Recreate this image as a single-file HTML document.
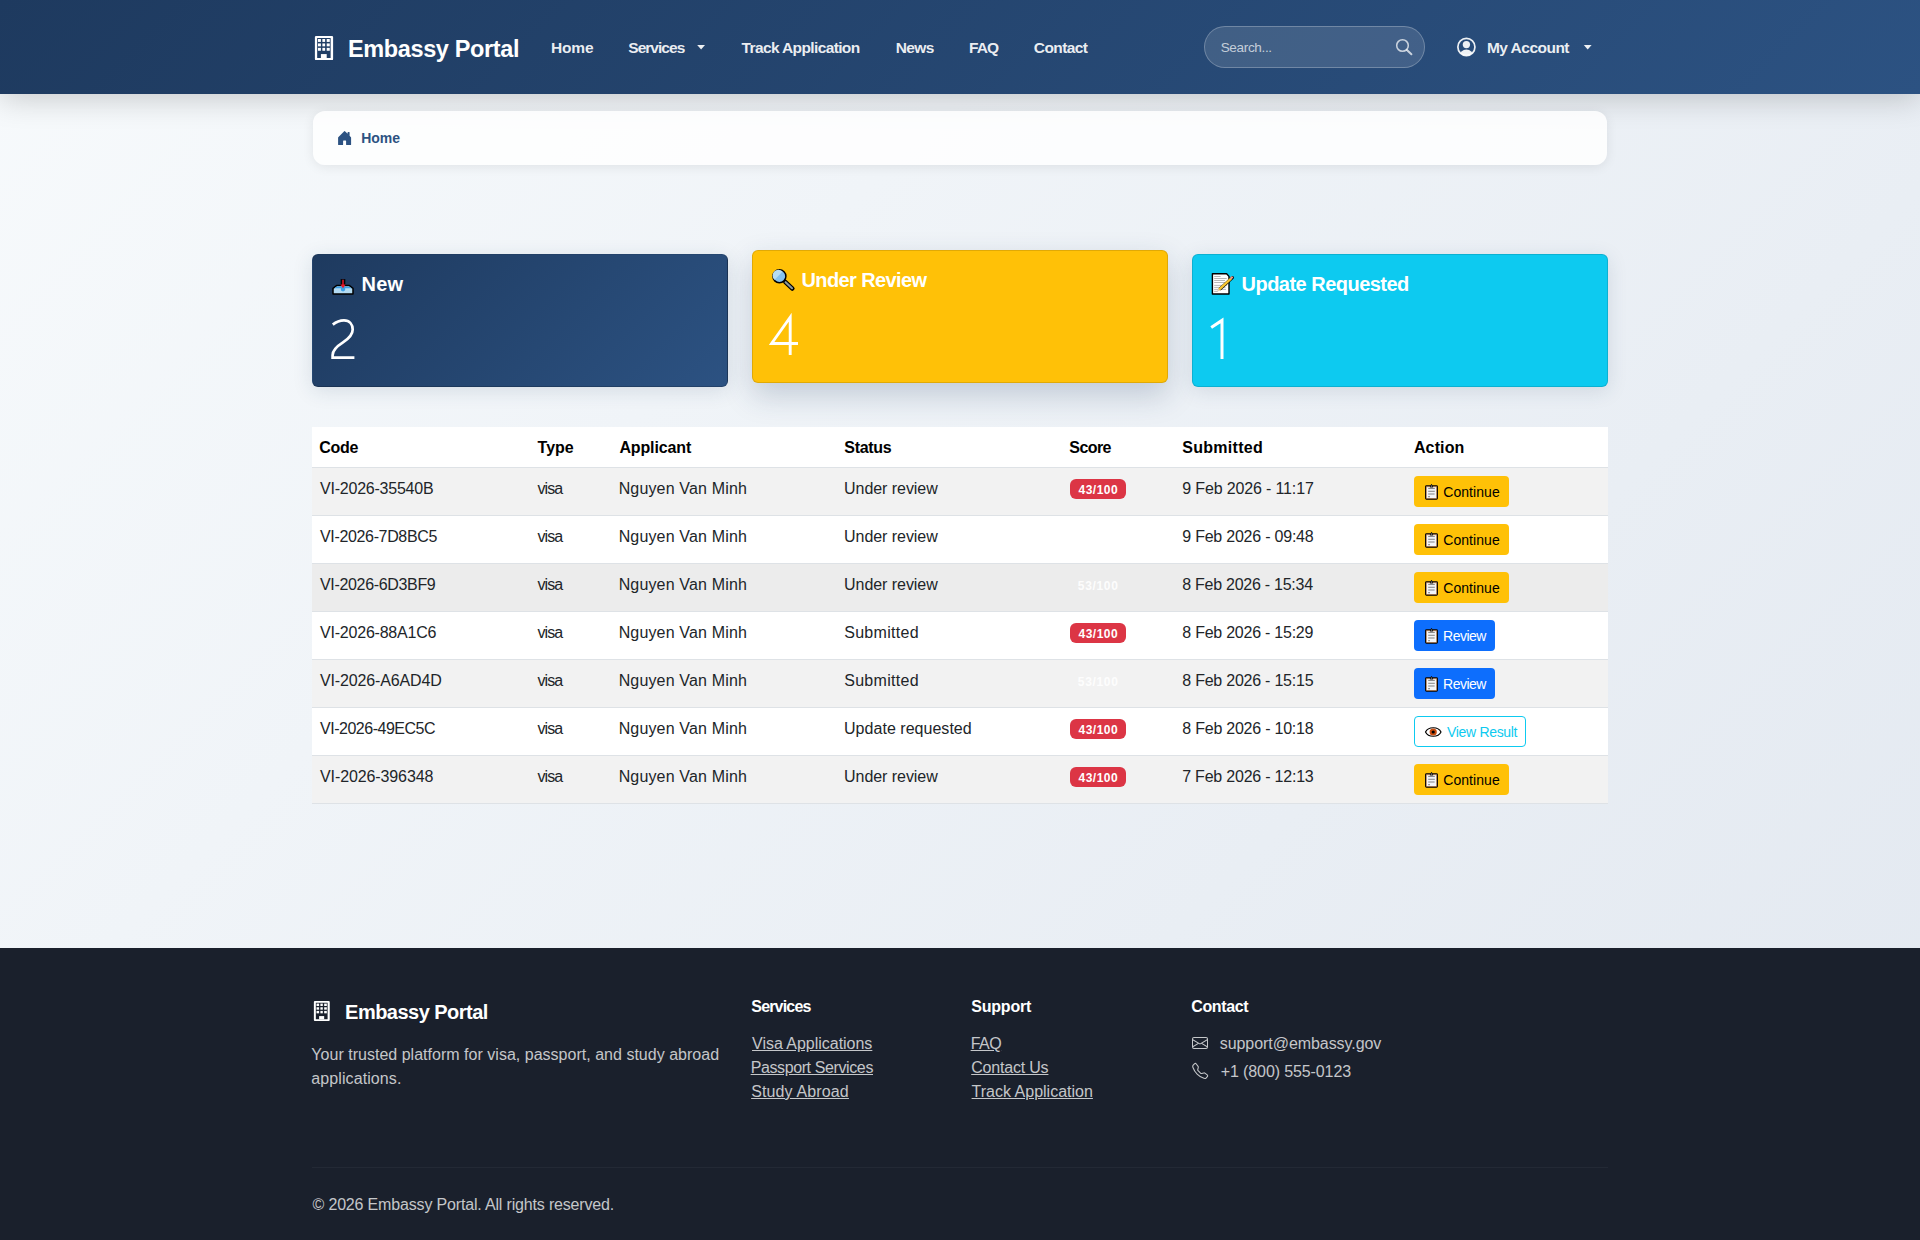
<!DOCTYPE html>
<html><head><meta charset="utf-8"><title>Embassy Portal</title>
<style>
html,body{margin:0;padding:0;width:1920px;height:1240px;overflow:hidden;}
body{position:relative;font-family:"Liberation Sans",sans-serif;background:linear-gradient(135deg,#f7fafc 0%,#e2e8f0 100%);}
.t{position:absolute;white-space:nowrap;}
.nav{position:absolute;left:0;top:0;width:1920px;height:94px;background:linear-gradient(135deg,#1e3a5f 0%,#2c5282 100%);box-shadow:0 4px 30px rgba(0,0,0,0.2);}
.search{position:absolute;left:1204px;top:26px;width:219px;height:40px;border-radius:21px;background:rgba(255,255,255,0.12);border:1px solid rgba(255,255,255,0.25);}
.bc{position:absolute;left:313px;top:111px;width:1294px;height:54px;border-radius:12px;background:rgba(255,255,255,0.82);box-shadow:0 2px 12px rgba(0,0,0,0.08);}
.card{position:absolute;width:414px;height:131px;border-radius:6px;border:1px solid rgba(0,0,0,0.12);box-shadow:0 4px 20px rgba(30,58,95,0.13);}
.c1{left:312px;top:254px;background:linear-gradient(135deg,#1e3a5f 0%,#2c5282 100%);}
.c2{left:752px;top:250px;background:#ffc107;box-shadow:0 12px 30px rgba(30,58,95,0.22);}
.c3{left:1192px;top:254px;background:#0dcaf0;}
.tbl{position:absolute;left:312px;top:427px;width:1296px;height:377px;background:#fff;}
.row{position:absolute;left:312px;width:1296px;height:47px;}
.hl{position:absolute;left:312px;width:1296px;height:1px;background:#dee2e6;}
.badge{position:absolute;left:1070px;width:56px;height:20px;border-radius:6px;background:#dc3545;}
.btn{position:absolute;left:1414px;height:31px;border-radius:4px;box-sizing:border-box;}
.bw{background:#ffc107;}
.bp{background:#0d6efd;}
.bo{border:1px solid #0dcaf0;background:#fff;}
.foot{position:absolute;left:0;top:948px;width:1920px;height:292px;background:#1a202c;}
.fhr{position:absolute;left:312px;top:1167px;width:1296px;height:1px;background:rgba(255,255,255,0.045);}
svg.ov{position:absolute;left:0;top:0;}
</style></head><body>
<div class="nav"></div>
<div class="search"></div>
<div class="bc"></div>
<div class="card c1"></div><div class="card c2"></div><div class="card c3"></div>
<div class="tbl"></div>
<div class="hl" style="top:467px"></div>
<div class="row" style="top:468px;background:#f2f2f2"></div>
<div class="hl" style="top:515px"></div>
<div class="badge" style="top:479px"></div>
<div class="btn bw" style="top:476px;width:95px"></div>
<div class="row" style="top:516px;background:#ffffff"></div>
<div class="hl" style="top:563px"></div>
<div class="btn bw" style="top:524px;width:95px"></div>
<div class="row" style="top:564px;background:#ececec"></div>
<div class="hl" style="top:611px"></div>
<div class="badge" style="top:575px;background:transparent"></div>
<div class="btn bw" style="top:572px;width:95px"></div>
<div class="row" style="top:612px;background:#ffffff"></div>
<div class="hl" style="top:659px"></div>
<div class="badge" style="top:623px"></div>
<div class="btn bp" style="top:620px;width:81px"></div>
<div class="row" style="top:660px;background:#f2f2f2"></div>
<div class="hl" style="top:707px"></div>
<div class="badge" style="top:671px;background:transparent"></div>
<div class="btn bp" style="top:668px;width:81px"></div>
<div class="row" style="top:708px;background:#ffffff"></div>
<div class="hl" style="top:755px"></div>
<div class="badge" style="top:719px"></div>
<div class="btn bo" style="top:716px;width:112px"></div>
<div class="row" style="top:756px;background:#f2f2f2"></div>
<div class="hl" style="top:803px"></div>
<div class="badge" style="top:767px"></div>
<div class="btn bw" style="top:764px;width:95px"></div>
<div class="foot"></div>
<div class="fhr"></div>
<div class="t" id="t0" style="left:347.89px;top:36.00px;font-size:23.5px;line-height:26px;font-weight:700;color:#ffffff;letter-spacing:-0.361px;">Embassy Portal</div>
<div class="t" id="t1" style="left:551.09px;top:39.00px;font-size:15.5px;line-height:17px;font-weight:700;color:rgba(255,255,255,0.92);letter-spacing:-0.190px;">Home</div>
<div class="t" id="t2" style="left:628.29px;top:39.00px;font-size:15.5px;line-height:17px;font-weight:700;color:rgba(255,255,255,0.92);letter-spacing:-0.969px;">Services</div>
<div class="t" id="t3" style="left:741.56px;top:39.00px;font-size:15.5px;line-height:17px;font-weight:700;color:rgba(255,255,255,0.92);letter-spacing:-0.625px;">Track Application</div>
<div class="t" id="t4" style="left:895.69px;top:39.00px;font-size:15.5px;line-height:17px;font-weight:700;color:rgba(255,255,255,0.92);letter-spacing:-0.638px;">News</div>
<div class="t" id="t5" style="left:969.09px;top:39.00px;font-size:15.5px;line-height:17px;font-weight:700;color:rgba(255,255,255,0.92);letter-spacing:-0.964px;">FAQ</div>
<div class="t" id="t6" style="left:1033.82px;top:39.00px;font-size:15.5px;line-height:17px;font-weight:700;color:rgba(255,255,255,0.92);letter-spacing:-0.581px;">Contact</div>
<div class="t" id="t7" style="left:1220.65px;top:40.00px;font-size:13.5px;line-height:15px;font-weight:400;color:rgba(255,255,255,0.7);letter-spacing:-0.318px;">Search...</div>
<div class="t" id="t8" style="left:1486.89px;top:39.00px;font-size:15.5px;line-height:17px;font-weight:700;color:rgba(255,255,255,0.92);letter-spacing:-0.515px;">My Account</div>
<div class="t" id="t9" style="left:361.15px;top:130.00px;font-size:14px;line-height:16px;font-weight:700;color:#2c5282;letter-spacing:0.018px;">Home</div>
<div class="t" id="t10" style="left:361.61px;top:273.00px;font-size:20px;line-height:22px;font-weight:700;color:#ffffff;letter-spacing:0.175px;">New</div>
<div class="t" id="t11" style="left:801.54px;top:269.00px;font-size:20px;line-height:22px;font-weight:700;color:#ffffff;letter-spacing:-0.620px;">Under Review</div>
<div class="t" id="t12" style="left:1241.54px;top:273.00px;font-size:20px;line-height:22px;font-weight:700;color:#ffffff;letter-spacing:-0.521px;">Update Requested</div>
<div class="t" id="t13" style="left:319.31px;top:439.00px;font-size:16px;line-height:17px;font-weight:700;color:#000;letter-spacing:-0.284px;">Code</div>
<div class="t" id="t14" style="left:537.54px;top:439.00px;font-size:16px;line-height:17px;font-weight:700;color:#000;letter-spacing:0.012px;">Type</div>
<div class="t" id="t15" style="left:619.40px;top:439.00px;font-size:16px;line-height:17px;font-weight:700;color:#000;letter-spacing:-0.129px;">Applicant</div>
<div class="t" id="t16" style="left:844.29px;top:439.00px;font-size:16px;line-height:17px;font-weight:700;color:#000;letter-spacing:-0.311px;">Status</div>
<div class="t" id="t17" style="left:1069.29px;top:439.00px;font-size:16px;line-height:17px;font-weight:700;color:#000;letter-spacing:-0.562px;">Score</div>
<div class="t" id="t18" style="left:1182.29px;top:439.00px;font-size:16px;line-height:17px;font-weight:700;color:#000;letter-spacing:0.279px;">Submitted</div>
<div class="t" id="t19" style="left:1413.90px;top:439.00px;font-size:16px;line-height:17px;font-weight:700;color:#000;letter-spacing:0.146px;">Action</div>
<div class="t" id="t20" style="left:320.04px;top:480.00px;font-size:16px;line-height:17px;font-weight:400;color:#212529;letter-spacing:-0.229px;">VI-2026-35540B</div>
<div class="t" id="t21" style="left:537.54px;top:480.00px;font-size:16px;line-height:17px;font-weight:400;color:#212529;letter-spacing:-0.922px;">visa</div>
<div class="t" id="t22" style="left:618.64px;top:480.00px;font-size:16px;line-height:17px;font-weight:400;color:#212529;letter-spacing:0.161px;">Nguyen Van Minh</div>
<div class="t" id="t23" style="left:844.04px;top:480.00px;font-size:16px;line-height:17px;font-weight:400;color:#212529;letter-spacing:-0.049px;">Under review</div>
<div class="t" id="t24" style="left:1182.24px;top:480.00px;font-size:16px;line-height:17px;font-weight:400;color:#212529;letter-spacing:-0.146px;">9 Feb 2026 - 11:17</div>
<div class="t" id="t25" style="left:320.04px;top:528.00px;font-size:16px;line-height:17px;font-weight:400;color:#212529;letter-spacing:-0.349px;">VI-2026-7D8BC5</div>
<div class="t" id="t26" style="left:537.54px;top:528.00px;font-size:16px;line-height:17px;font-weight:400;color:#212529;letter-spacing:-0.922px;">visa</div>
<div class="t" id="t27" style="left:618.64px;top:528.00px;font-size:16px;line-height:17px;font-weight:400;color:#212529;letter-spacing:0.161px;">Nguyen Van Minh</div>
<div class="t" id="t28" style="left:844.04px;top:528.00px;font-size:16px;line-height:17px;font-weight:400;color:#212529;letter-spacing:-0.049px;">Under review</div>
<div class="t" id="t29" style="left:1182.24px;top:528.00px;font-size:16px;line-height:17px;font-weight:400;color:#212529;letter-spacing:-0.221px;">9 Feb 2026 - 09:48</div>
<div class="t" id="t30" style="left:320.04px;top:576.00px;font-size:16px;line-height:17px;font-weight:400;color:#212529;letter-spacing:-0.336px;">VI-2026-6D3BF9</div>
<div class="t" id="t31" style="left:537.54px;top:576.00px;font-size:16px;line-height:17px;font-weight:400;color:#212529;letter-spacing:-0.922px;">visa</div>
<div class="t" id="t32" style="left:618.64px;top:576.00px;font-size:16px;line-height:17px;font-weight:400;color:#212529;letter-spacing:0.161px;">Nguyen Van Minh</div>
<div class="t" id="t33" style="left:844.04px;top:576.00px;font-size:16px;line-height:17px;font-weight:400;color:#212529;letter-spacing:-0.049px;">Under review</div>
<div class="t" id="t34" style="left:1182.27px;top:576.00px;font-size:16px;line-height:17px;font-weight:400;color:#212529;letter-spacing:-0.258px;">8 Feb 2026 - 15:34</div>
<div class="t" id="t35" style="left:320.04px;top:624.00px;font-size:16px;line-height:17px;font-weight:400;color:#212529;letter-spacing:-0.214px;">VI-2026-88A1C6</div>
<div class="t" id="t36" style="left:537.54px;top:624.00px;font-size:16px;line-height:17px;font-weight:400;color:#212529;letter-spacing:-0.922px;">visa</div>
<div class="t" id="t37" style="left:618.64px;top:624.00px;font-size:16px;line-height:17px;font-weight:400;color:#212529;letter-spacing:0.161px;">Nguyen Van Minh</div>
<div class="t" id="t38" style="left:844.15px;top:624.00px;font-size:16px;line-height:17px;font-weight:400;color:#212529;letter-spacing:0.318px;">Submitted</div>
<div class="t" id="t39" style="left:1182.27px;top:624.00px;font-size:16px;line-height:17px;font-weight:400;color:#212529;letter-spacing:-0.239px;">8 Feb 2026 - 15:29</div>
<div class="t" id="t40" style="left:320.04px;top:672.00px;font-size:16px;line-height:17px;font-weight:400;color:#212529;letter-spacing:-0.141px;">VI-2026-A6AD4D</div>
<div class="t" id="t41" style="left:537.54px;top:672.00px;font-size:16px;line-height:17px;font-weight:400;color:#212529;letter-spacing:-0.922px;">visa</div>
<div class="t" id="t42" style="left:618.64px;top:672.00px;font-size:16px;line-height:17px;font-weight:400;color:#212529;letter-spacing:0.161px;">Nguyen Van Minh</div>
<div class="t" id="t43" style="left:844.15px;top:672.00px;font-size:16px;line-height:17px;font-weight:400;color:#212529;letter-spacing:0.318px;">Submitted</div>
<div class="t" id="t44" style="left:1182.27px;top:672.00px;font-size:16px;line-height:17px;font-weight:400;color:#212529;letter-spacing:-0.231px;">8 Feb 2026 - 15:15</div>
<div class="t" id="t45" style="left:320.04px;top:720.00px;font-size:16px;line-height:17px;font-weight:400;color:#212529;letter-spacing:-0.488px;">VI-2026-49EC5C</div>
<div class="t" id="t46" style="left:537.54px;top:720.00px;font-size:16px;line-height:17px;font-weight:400;color:#212529;letter-spacing:-0.922px;">visa</div>
<div class="t" id="t47" style="left:618.64px;top:720.00px;font-size:16px;line-height:17px;font-weight:400;color:#212529;letter-spacing:0.161px;">Nguyen Van Minh</div>
<div class="t" id="t48" style="left:844.04px;top:720.00px;font-size:16px;line-height:17px;font-weight:400;color:#212529;letter-spacing:0.030px;">Update requested</div>
<div class="t" id="t49" style="left:1182.27px;top:720.00px;font-size:16px;line-height:17px;font-weight:400;color:#212529;letter-spacing:-0.226px;">8 Feb 2026 - 10:18</div>
<div class="t" id="t50" style="left:320.04px;top:768.00px;font-size:16px;line-height:17px;font-weight:400;color:#212529;letter-spacing:-0.110px;">VI-2026-396348</div>
<div class="t" id="t51" style="left:537.54px;top:768.00px;font-size:16px;line-height:17px;font-weight:400;color:#212529;letter-spacing:-0.922px;">visa</div>
<div class="t" id="t52" style="left:618.64px;top:768.00px;font-size:16px;line-height:17px;font-weight:400;color:#212529;letter-spacing:0.161px;">Nguyen Van Minh</div>
<div class="t" id="t53" style="left:844.04px;top:768.00px;font-size:16px;line-height:17px;font-weight:400;color:#212529;letter-spacing:-0.049px;">Under review</div>
<div class="t" id="t54" style="left:1182.21px;top:768.00px;font-size:16px;line-height:17px;font-weight:400;color:#212529;letter-spacing:-0.216px;">7 Feb 2026 - 12:13</div>
<div class="t" id="t55" style="left:1078.54px;top:483.00px;font-size:12px;line-height:14px;font-weight:700;color:#fff;letter-spacing:0.482px;">43/100</div>
<div class="t" id="t56" style="left:1443.25px;top:484.00px;font-size:14px;line-height:16px;font-weight:400;color:#000;letter-spacing:0.053px;">Continue</div>
<div class="t" id="t57" style="left:1443.25px;top:532.00px;font-size:14px;line-height:16px;font-weight:400;color:#000;letter-spacing:0.053px;">Continue</div>
<div class="t" id="t58" style="left:1077.84px;top:579.00px;font-size:12px;line-height:14px;font-weight:700;color:rgba(255,255,255,0.9);letter-spacing:0.670px;">53/100</div>
<div class="t" id="t59" style="left:1443.25px;top:580.00px;font-size:14px;line-height:16px;font-weight:400;color:#000;letter-spacing:0.053px;">Continue</div>
<div class="t" id="t60" style="left:1078.54px;top:627.00px;font-size:12px;line-height:14px;font-weight:700;color:#fff;letter-spacing:0.482px;">43/100</div>
<div class="t" id="t61" style="left:1443.06px;top:628.00px;font-size:14px;line-height:16px;font-weight:400;color:#fff;letter-spacing:-0.497px;">Review</div>
<div class="t" id="t62" style="left:1077.84px;top:675.00px;font-size:12px;line-height:14px;font-weight:700;color:rgba(255,255,255,0.9);letter-spacing:0.670px;">53/100</div>
<div class="t" id="t63" style="left:1443.06px;top:676.00px;font-size:14px;line-height:16px;font-weight:400;color:#fff;letter-spacing:-0.497px;">Review</div>
<div class="t" id="t64" style="left:1078.54px;top:723.00px;font-size:12px;line-height:14px;font-weight:700;color:#fff;letter-spacing:0.482px;">43/100</div>
<div class="t" id="t65" style="left:1447.04px;top:724.00px;font-size:14px;line-height:16px;font-weight:400;color:#0dcaf0;letter-spacing:-0.321px;">View Result</div>
<div class="t" id="t66" style="left:1078.54px;top:771.00px;font-size:12px;line-height:14px;font-weight:700;color:#fff;letter-spacing:0.482px;">43/100</div>
<div class="t" id="t67" style="left:1443.25px;top:772.00px;font-size:14px;line-height:16px;font-weight:400;color:#000;letter-spacing:0.053px;">Continue</div>
<div class="t" id="t68" style="left:345.11px;top:1001.00px;font-size:20px;line-height:22px;font-weight:700;color:#ffffff;letter-spacing:-0.527px;">Embassy Portal</div>
<div class="t" id="t69" style="left:311.34px;top:1046.00px;font-size:16px;line-height:17px;font-weight:400;color:rgba(255,255,255,0.75);letter-spacing:0.018px;">Your trusted platform for visa, passport, and study abroad</div>
<div class="t" id="t70" style="left:311.28px;top:1070.00px;font-size:16px;line-height:17px;font-weight:400;color:rgba(255,255,255,0.75);letter-spacing:0.098px;">applications.</div>
<div class="t" id="t71" style="left:751.29px;top:998.00px;font-size:16px;line-height:17px;font-weight:700;color:#ffffff;letter-spacing:-0.824px;">Services</div>
<div class="t" id="t72" style="left:971.29px;top:998.00px;font-size:16px;line-height:17px;font-weight:700;color:#ffffff;letter-spacing:-0.216px;">Support</div>
<div class="t" id="t73" style="left:1191.31px;top:998.00px;font-size:16px;line-height:17px;font-weight:700;color:#ffffff;letter-spacing:-0.377px;">Contact</div>
<div class="t" id="t74" style="left:752.04px;top:1035.00px;font-size:16px;line-height:17px;font-weight:400;color:rgba(255,255,255,0.75);letter-spacing:-0.022px;text-decoration:underline;">Visa Applications</div>
<div class="t" id="t75" style="left:750.64px;top:1059.00px;font-size:16px;line-height:17px;font-weight:400;color:rgba(255,255,255,0.75);letter-spacing:-0.386px;text-decoration:underline;">Passport Services</div>
<div class="t" id="t76" style="left:751.15px;top:1083.00px;font-size:16px;line-height:17px;font-weight:400;color:rgba(255,255,255,0.75);letter-spacing:0.140px;text-decoration:underline;">Study Abroad</div>
<div class="t" id="t77" style="left:970.64px;top:1035.00px;font-size:16px;line-height:17px;font-weight:400;color:rgba(255,255,255,0.75);letter-spacing:-0.500px;text-decoration:underline;">FAQ</div>
<div class="t" id="t78" style="left:971.21px;top:1059.00px;font-size:16px;line-height:17px;font-weight:400;color:rgba(255,255,255,0.75);letter-spacing:-0.191px;text-decoration:underline;">Contact Us</div>
<div class="t" id="t79" style="left:971.59px;top:1083.00px;font-size:16px;line-height:17px;font-weight:400;color:rgba(255,255,255,0.75);letter-spacing:0.005px;text-decoration:underline;">Track Application</div>
<div class="t" id="t80" style="left:1219.76px;top:1035.00px;font-size:16px;line-height:17px;font-weight:400;color:rgba(255,255,255,0.75);letter-spacing:-0.060px;">support@embassy.gov</div>
<div class="t" id="t81" style="left:1220.74px;top:1063.00px;font-size:16px;line-height:17px;font-weight:400;color:rgba(255,255,255,0.75);letter-spacing:-0.109px;">+1 (800) 555-0123</div>
<div class="t" id="t82" style="left:312.53px;top:1196.00px;font-size:16px;line-height:17px;font-weight:400;color:rgba(255,255,255,0.75);letter-spacing:-0.169px;">&copy; 2026 Embassy Portal. All rights reserved.</div>
<svg class="ov" width="1920" height="1240" viewBox="0 0 1920 1240">
<g transform="translate(314.7,35.9) scale(0.9842,1.0042)" fill="#fff">
<path fill-rule="evenodd" d="M0.2,1.2 Q0.2,0 1.4,0 H17.5 Q18.7,0 18.7,1.2 V22.9 Q18.7,24.1 17.5,24.1 H1.4 Q0.2,24.1 0.2,22.9 Z M2.5,2.2 V21.9 H16.2 V2.2 Z"/>
<rect x="3.3" y="3.1" width="3" height="2.9"/><rect x="7.8" y="3.1" width="2.8" height="2.9"/><rect x="12.2" y="3.1" width="3.1" height="2.9"/>
<rect x="3.3" y="7.5" width="3" height="2.9"/><rect x="7.8" y="7.5" width="2.8" height="2.9"/><rect x="12.2" y="7.5" width="3.1" height="2.9"/>
<rect x="3.3" y="11.9" width="3" height="2.9"/><rect x="7.8" y="11.9" width="2.8" height="2.9"/><rect x="12.2" y="11.9" width="3.1" height="2.9"/>
<rect x="6.3" y="18.1" width="5.9" height="3.9"/>
</g>
<g transform="translate(313.7,1001) scale(0.8579,0.8333)" fill="#fff">
<path fill-rule="evenodd" d="M0.2,1.2 Q0.2,0 1.4,0 H17.5 Q18.7,0 18.7,1.2 V22.9 Q18.7,24.1 17.5,24.1 H1.4 Q0.2,24.1 0.2,22.9 Z M2.5,2.2 V21.9 H16.2 V2.2 Z"/>
<rect x="3.3" y="3.1" width="3" height="2.9"/><rect x="7.8" y="3.1" width="2.8" height="2.9"/><rect x="12.2" y="3.1" width="3.1" height="2.9"/>
<rect x="3.3" y="7.5" width="3" height="2.9"/><rect x="7.8" y="7.5" width="2.8" height="2.9"/><rect x="12.2" y="7.5" width="3.1" height="2.9"/>
<rect x="3.3" y="11.9" width="3" height="2.9"/><rect x="7.8" y="11.9" width="2.8" height="2.9"/><rect x="12.2" y="11.9" width="3.1" height="2.9"/>
<rect x="6.3" y="18.1" width="5.9" height="3.9"/>
</g>
<g transform="translate(336.6,130) scale(1)" fill="#2c5282"><path d="M6.5 14.5v-3.505c0-.245.25-.495.5-.495h2c.25 0 .5.25.5.5v3.5a.5.5 0 0 0 .5.5h4a.5.5 0 0 0 .5-.5v-7a.5.5 0 0 0-.146-.354L13 5.793V2.5a.5.5 0 0 0-.5-.5h-1a.5.5 0 0 0-.5.5v1.293L8.354 1.146a.5.5 0 0 0-.708 0l-6 6A.5.5 0 0 0 1.5 7.5v7a.5.5 0 0 0 .5.5h4a.5.5 0 0 0 .5-.5"/></g>
<circle cx="1402.5" cy="45.5" r="5.8" fill="none" stroke="rgba(255,255,255,0.72)" stroke-width="1.55"/><line x1="1406.9" y1="50" x2="1411.4" y2="54.3" stroke="rgba(255,255,255,0.72)" stroke-width="2" stroke-linecap="round"/>
<clipPath id="pc"><circle cx="1466.4" cy="47" r="8.6"/></clipPath><circle cx="1466.4" cy="47" r="8.55" fill="none" stroke="rgba(255,255,255,0.92)" stroke-width="1.7"/><circle cx="1466.4" cy="44.6" r="3.65" fill="rgba(255,255,255,0.92)"/><ellipse cx="1466.4" cy="56.2" rx="6.9" ry="6.6" fill="rgba(255,255,255,0.92)" clip-path="url(#pc)"/>
<path d="M697.2,45 H705.0 L701.1,49.4 Z" fill="rgba(255,255,255,0.92)"/>
<path d="M1583.8,45 H1591.6 L1587.7,49.4 Z" fill="rgba(255,255,255,0.92)"/>
<g transform="translate(1192,1035)" fill="rgba(255,255,255,0.75)"><path d="M0 4a2 2 0 0 1 2-2h12a2 2 0 0 1 2 2v8a2 2 0 0 1-2 2H2a2 2 0 0 1-2-2zm2-1a1 1 0 0 0-1 1v.217l7 4.2 7-4.2V4a1 1 0 0 0-1-1zm13 2.383-4.708 2.825L15 11.105zm-.034 6.876-5.64-3.471L8 9.583l-1.326-.795-5.64 3.47A1 1 0 0 0 2 13h12a1 1 0 0 0 .966-.741M1 11.105l4.708-2.897L1 5.383z"/></g>
<g transform="translate(1192.2,1063)" fill="rgba(255,255,255,0.75)"><path d="M3.654 1.328a.678.678 0 0 0-1.015-.063L1.605 2.3c-.483.484-.661 1.169-.45 1.77a17.6 17.6 0 0 0 4.168 6.608 17.6 17.6 0 0 0 6.608 4.168c.601.211 1.286.033 1.77-.45l1.034-1.034a.678.678 0 0 0-.063-1.015l-2.307-1.794a.68.68 0 0 0-.58-.122l-2.19.547a1.75 1.75 0 0 1-1.657-.459L5.482 8.062a1.75 1.75 0 0 1-.46-1.657l.548-2.19a.68.68 0 0 0-.122-.58zM1.884.511a1.745 1.745 0 0 1 2.612.163L6.29 2.98c.329.423.445.974.315 1.494l-.547 2.19a.68.68 0 0 0 .178.643l2.457 2.457a.68.68 0 0 0 .644.178l2.189-.547a1.75 1.75 0 0 1 1.494.315l2.306 1.794c.829.645.905 1.87.163 2.611l-1.034 1.034c-.74.74-1.846 1.065-2.877.702a18.6 18.6 0 0 1-7.01-4.42 18.6 18.6 0 0 1-4.42-7.009c-.362-1.03-.037-2.137.703-2.877z"/></g>
<path d="M332.8,324.6 C336,322 340,320.4 344,320.4 C349.6,320.4 352.7,324.4 352.7,329.6 C352.7,335 349,338.6 343,342.4 C336,346.8 332.6,351 332.6,355.2 V357.6 H354.4" fill="none" stroke="#fff" stroke-width="2.7"/>
<path d="M790.2,355 V317.2 L771.6,343.5 H798" fill="none" stroke="#fff" stroke-width="2.9" stroke-linejoin="miter"/>
<path d="M1222,359 V320.4 L1211.2,327.6" fill="none" stroke="#fff" stroke-width="3"/>
<g>
<path d="M341.2,286 V279 M344.8,286 V279" stroke="#000" stroke-width="1"/>
<path d="M333,294 V288.4 L336.6,285.6 H349.4 L353,288.4 V294 Z" fill="#b3dbf2" stroke="#000" stroke-width="1.5" stroke-linejoin="round"/>
<path d="M334.2,288.2 L337,286.4 H349 L351.8,288.2 Z" fill="#3d9fe6"/>
<ellipse cx="343" cy="289" rx="2.3" ry="2.4" fill="#3d9fe6"/>
<path d="M343,279.2 V286" stroke="#000" stroke-width="3.4"/>
<path d="M343,279.8 V285.5" stroke="#e8162a" stroke-width="1.5"/>
<path d="M340.4,284.4 L343,288.2 L345.6,284.4 Z" fill="#e8162a"/>
</g>
<g>
<line x1="785.2" y1="281.8" x2="792.4" y2="288.6" stroke="#000" stroke-width="4.4" stroke-linecap="round"/>
<line x1="785.6" y1="282.2" x2="792" y2="288.2" stroke="#8a9799" stroke-width="2.2" stroke-linecap="round"/>
<circle cx="779.4" cy="276.3" r="6.5" fill="#86c2ee" stroke="#000" stroke-width="1.5"/>
<path d="M774.4,280 L782.6,271.4 A5.6,5.6 0 0 0 774.4,280 Z" fill="#b7ddf3"/>
</g>
<g>
<path d="M1212.4,273.8 H1226.6 L1229,276.4 V294 H1212.4 Z" fill="#fff" stroke="#000" stroke-width="1.4" stroke-linejoin="round"/>
<g stroke="#b0b0b0" stroke-width="0.9"><path d="M1214.2,276.5 H1220.6"/><path d="M1214.2,278.5 H1226.7"/><path d="M1214.2,280.5 H1225"/><path d="M1214.2,282.5 H1225"/><path d="M1214.2,285.4 H1226.7"/><path d="M1214.2,287.4 H1225.5"/><path d="M1214.2,289.4 H1226"/><path d="M1214.2,291.4 H1217.8"/></g>
<line x1="1220.4" y1="288.6" x2="1232.4" y2="277.6" stroke="#000" stroke-width="3.2" stroke-linecap="round"/>
<line x1="1219" y1="289.6" x2="1231" y2="278.6" stroke="#f7c530" stroke-width="2.4"/>
<line x1="1230.6" y1="278.8" x2="1232.6" y2="276.8" stroke="#e99a8a" stroke-width="2.2"/>
<line x1="1217.6" y1="291" x2="1219.2" y2="289.5" stroke="#f0d2b0" stroke-width="1.5"/>
</g>
<g>
<rect x="1425.6" y="485.7" width="11.8" height="13.5" rx="0.9" fill="#c8956a" stroke="#000" stroke-width="1.05"/>
<rect x="1426.8" y="487.2" width="9.3" height="10.8" fill="#f4f6f8"/>
<path d="M1430.1,487.1 L1431.5,484.3 L1432.9,487.1 Z" fill="#9a9a9a" stroke="#000" stroke-width=".8" stroke-linejoin="round"/>
<g stroke="#8c8c8c" stroke-width="1.1"><path d="M1428.2,488.5 H1434.8"/><path d="M1428.2,491.3 H1434.8"/><path d="M1428.2,494 H1434.6"/><path d="M1428.2,496.6 H1429.9"/></g>
</g>
<g>
<rect x="1425.6" y="533.7" width="11.8" height="13.5" rx="0.9" fill="#c8956a" stroke="#000" stroke-width="1.05"/>
<rect x="1426.8" y="535.2" width="9.3" height="10.8" fill="#f4f6f8"/>
<path d="M1430.1,535.1 L1431.5,532.3 L1432.9,535.1 Z" fill="#9a9a9a" stroke="#000" stroke-width=".8" stroke-linejoin="round"/>
<g stroke="#8c8c8c" stroke-width="1.1"><path d="M1428.2,536.5 H1434.8"/><path d="M1428.2,539.3 H1434.8"/><path d="M1428.2,542 H1434.6"/><path d="M1428.2,544.6 H1429.9"/></g>
</g>
<g>
<rect x="1425.6" y="581.7" width="11.8" height="13.5" rx="0.9" fill="#c8956a" stroke="#000" stroke-width="1.05"/>
<rect x="1426.8" y="583.2" width="9.3" height="10.8" fill="#f4f6f8"/>
<path d="M1430.1,583.1 L1431.5,580.3 L1432.9,583.1 Z" fill="#9a9a9a" stroke="#000" stroke-width=".8" stroke-linejoin="round"/>
<g stroke="#8c8c8c" stroke-width="1.1"><path d="M1428.2,584.5 H1434.8"/><path d="M1428.2,587.3 H1434.8"/><path d="M1428.2,590 H1434.6"/><path d="M1428.2,592.6 H1429.9"/></g>
</g>
<g>
<rect x="1425.6" y="629.7" width="11.8" height="13.5" rx="0.9" fill="#c8956a" stroke="#000" stroke-width="1.05"/>
<rect x="1426.8" y="631.2" width="9.3" height="10.8" fill="#f4f6f8"/>
<path d="M1430.1,631.1 L1431.5,628.3 L1432.9,631.1 Z" fill="#9a9a9a" stroke="#000" stroke-width=".8" stroke-linejoin="round"/>
<g stroke="#8c8c8c" stroke-width="1.1"><path d="M1428.2,632.5 H1434.8"/><path d="M1428.2,635.3 H1434.8"/><path d="M1428.2,638 H1434.6"/><path d="M1428.2,640.6 H1429.9"/></g>
</g>
<g>
<rect x="1425.6" y="677.7" width="11.8" height="13.5" rx="0.9" fill="#c8956a" stroke="#000" stroke-width="1.05"/>
<rect x="1426.8" y="679.2" width="9.3" height="10.8" fill="#f4f6f8"/>
<path d="M1430.1,679.1 L1431.5,676.3 L1432.9,679.1 Z" fill="#9a9a9a" stroke="#000" stroke-width=".8" stroke-linejoin="round"/>
<g stroke="#8c8c8c" stroke-width="1.1"><path d="M1428.2,680.5 H1434.8"/><path d="M1428.2,683.3 H1434.8"/><path d="M1428.2,686 H1434.6"/><path d="M1428.2,688.6 H1429.9"/></g>
</g>
<g>
<rect x="1425.6" y="773.7" width="11.8" height="13.5" rx="0.9" fill="#c8956a" stroke="#000" stroke-width="1.05"/>
<rect x="1426.8" y="775.2" width="9.3" height="10.8" fill="#f4f6f8"/>
<path d="M1430.1,775.1 L1431.5,772.3 L1432.9,775.1 Z" fill="#9a9a9a" stroke="#000" stroke-width=".8" stroke-linejoin="round"/>
<g stroke="#8c8c8c" stroke-width="1.1"><path d="M1428.2,776.5 H1434.8"/><path d="M1428.2,779.3 H1434.8"/><path d="M1428.2,782 H1434.6"/><path d="M1428.2,784.6 H1429.9"/></g>
</g>
<g>
<path d="M1425.5,732 C1428.2,726.3 1438.3,726.3 1441,732 C1438.3,737.7 1428.2,737.7 1425.5,732 Z" fill="#fff" stroke="#000" stroke-width="1.15"/>
<circle cx="1433.2" cy="732" r="3.6" fill="#c94a0c"/>
<circle cx="1433.2" cy="732" r="1.6" fill="#000"/>
</g>
</svg>
</body></html>
